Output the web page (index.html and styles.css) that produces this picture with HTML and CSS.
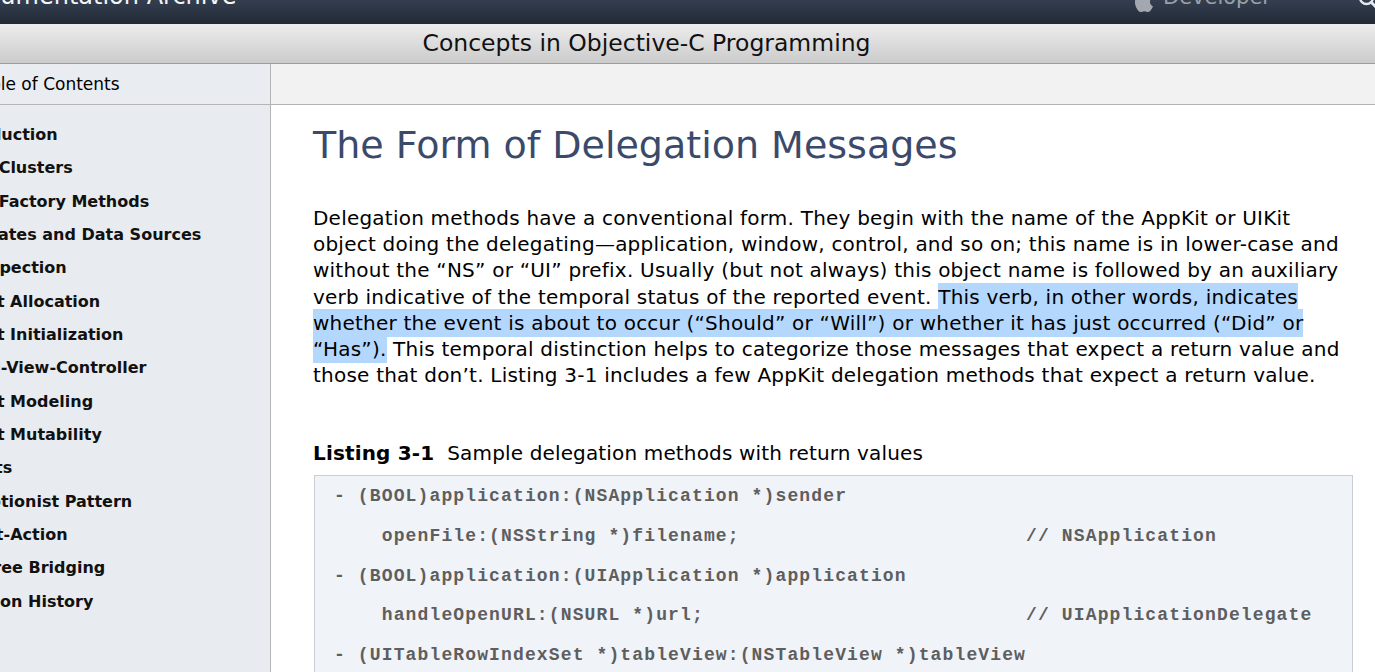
FILE: index.html
```html
<!DOCTYPE html>
<html lang="en">
<head>
<meta charset="utf-8">
<title>The Form of Delegation Messages</title>
<link rel="stylesheet" href="styles.css">
</head>
<body>
<header class="topbar">
  <div class="topbar-inner">
    <span class="brand">Documentation Archive</span>
    <span class="dev">
      <svg class="apple" viewBox="0 0 24 28" width="22" height="26" aria-hidden="true"><path d="M19.6 14.8c0-3 2.5-4.5 2.6-4.6-1.4-2.1-3.6-2.4-4.4-2.4-1.9-.2-3.6 1.1-4.6 1.1-1 0-2.4-1.1-4-1-2 0-3.9 1.2-5 3-2.1 3.7-.5 9.2 1.5 12.2 1 1.5 2.2 3.1 3.8 3 1.5-.1 2.1-1 4-1 1.8 0 2.4 1 4 1 1.7 0 2.7-1.5 3.7-3 1.2-1.7 1.6-3.3 1.7-3.4-.1 0-3.3-1.3-3.3-4.9zM16.6 5.8c.8-1 1.4-2.4 1.2-3.8-1.2.1-2.6.8-3.5 1.8-.8.9-1.4 2.3-1.2 3.7 1.3.1 2.7-.7 3.5-1.7z" fill="#a3a8b0"/></svg>
      <span class="dev-label">Developer</span>
    </span>
    <svg class="search" viewBox="0 0 24 24" width="24" height="24" aria-hidden="true"><circle cx="9.5" cy="9.5" r="6.5" fill="none" stroke="#e6e8ec" stroke-width="2.4"/><path d="M14.5 14.5l6.5 6.5" stroke="#e6e8ec" stroke-width="3" stroke-linecap="round"/></svg>
  </div>
</header>

<div class="titlebar">Concepts in Objective-C Programming</div>

<div class="subbar">
  <div class="toc-head"><span>Table of Contents</span></div>
  <div class="subbar-rest"></div>
</div>

<div class="main">
  <nav class="toc">
    <ul>
      <li>Introduction</li>
      <li>Class Clusters</li>
      <li>Class Factory Methods</li>
      <li>Delegates and Data Sources</li>
      <li>Introspection</li>
      <li>Object Allocation</li>
      <li>Object Initialization</li>
      <li>Model-View-Controller</li>
      <li>Object Modeling</li>
      <li>Object Mutability</li>
      <li>Outlets</li>
      <li>Receptionist Pattern</li>
      <li>Target-Action</li>
      <li>Toll-Free Bridging</li>
      <li>Revision History</li>
    </ul>
  </nav>
  <article class="content">
    <h1>The Form of Delegation Messages</h1>
    <p class="body">Delegation methods have a conventional form. They begin with the name of the AppKit or UIKit<br>object doing the delegating—application, window, control, and so on; this name is in lower-case and<br>without the “NS” or “UI” prefix. Usually (but not always) this object name is followed by an auxiliary<br>verb indicative of the temporal status of the reported event. <span class="sel">This verb, in other words, indicates<br>whether the event is about to occur (“Should” or “Will”) or whether it has just occurred (“Did” or<br>“Has”).</span> This temporal distinction helps to categorize those messages that expect a return value and<br>those that don’t. Listing 3-1 includes a few AppKit delegation methods that expect a return value.</p>
    <p class="caption"><strong>Listing 3-1</strong>&nbsp; Sample delegation methods with return values</p>
    <div class="codebox"><pre>- (BOOL)application:(NSApplication *)sender
    openFile:(NSString *)filename;                        // NSApplication
- (BOOL)application:(UIApplication *)application
    handleOpenURL:(NSURL *)url;                           // UIApplicationDelegate
- (UITableRowIndexSet *)tableView:(NSTableView *)tableView</pre></div>
  </article>
</div>
</body>
</html>
```

FILE: styles.css
```css
html, body {
  margin: 0;
  padding: 0;
  height: 100%;
  overflow: hidden;
  background: #ffffff;
  font-family: "DejaVu Sans", "Noto Sans", sans-serif;
  color: #000;
}

.topbar {
  height: 24px;
  overflow: hidden;
  background: linear-gradient(#333e4f, #232a36);
}
.topbar-inner {
  display: flex;
  align-items: baseline;
  height: 30px;
  margin-top: -19px;
}
.brand {
  font-size: 24px;
  color: #f4f5f7;
  margin-left: -46px;
  line-height: 30px;
}
.dev {
  margin-left: auto;
  display: flex;
  align-items: baseline;
  gap: 9px;
  color: #9aa0a8;
  font-size: 21px;
  line-height: 30px;
  margin-right: 86px;
}
.apple { align-self: flex-end; margin-bottom: -2px; }
.search { align-self: flex-end; margin-right: -6px; margin-bottom: -1px; }

.titlebar {
  height: 39px;
  line-height: 39px;
  border-bottom: 1px solid #9c9c9c;
  background: linear-gradient(#ededed, #cbcbcb);
  text-align: center;
  font-size: 23.5px;
  padding-right: 82px;
  color: #111;
}

.subbar {
  display: flex;
  height: 40px;
  border-bottom: 1px solid #b4b4b4;
}
.toc-head {
  width: 270px;
  flex: none;
  background: #e9ecf0;
  border-right: 1px solid #b4b4b4;
  overflow: hidden;
  white-space: nowrap;
  font-size: 17px;
  line-height: 40px;
}
.toc-head span { margin-left: -28px; }
.subbar-rest {
  flex: 1;
  background: #f2f2f2;
}

.main {
  display: flex;
  height: 567px;
}
.toc {
  width: 270px;
  flex: none;
  background: #e8ebef;
  border-right: 1px solid #b4b4b4;
  overflow: hidden;
  white-space: nowrap;
}
.toc ul {
  list-style: none;
  margin: 13px 0 0 -54px;
  padding: 0;
}
.toc li {
  font-size: 16px;
  font-weight: bold;
  line-height: 33.35px;
  color: #111;
}

.content {
  flex: 1;
  padding-left: 42px;
  overflow: hidden;
}
.content h1 {
  margin: 17px 0 0;
  font-size: 38px;
  font-weight: normal;
  color: #3b4a6b;
  line-height: 46px;
}
.body {
  margin: 37px 0 0;
  font-size: 20px;
  letter-spacing: 0.22px;
  line-height: 26.2px;
  white-space: nowrap;
}
.sel {
  background: #b4d7fe;
  padding: 2px 0;
}
.caption {
  margin: 52px 0 0;
  font-size: 20px;
  letter-spacing: 0.15px;
  line-height: 26px;
}
.caption strong { font-weight: bold; }

.codebox {
  margin: 9px 22px 0 1px;
  background: #f0f3f8;
  border: 1px solid #c9cdd4;
  border-bottom: none;
  padding: 1px 0 0 19px;
  height: 200px;
}
.codebox pre {
  margin: 0;
  font-family: "Liberation Mono", "Courier New", monospace;
  font-weight: bold;
  font-size: 18px;
  letter-spacing: 1.13px;
  line-height: 39.6px;
  color: #5e5e5e;
}
```
